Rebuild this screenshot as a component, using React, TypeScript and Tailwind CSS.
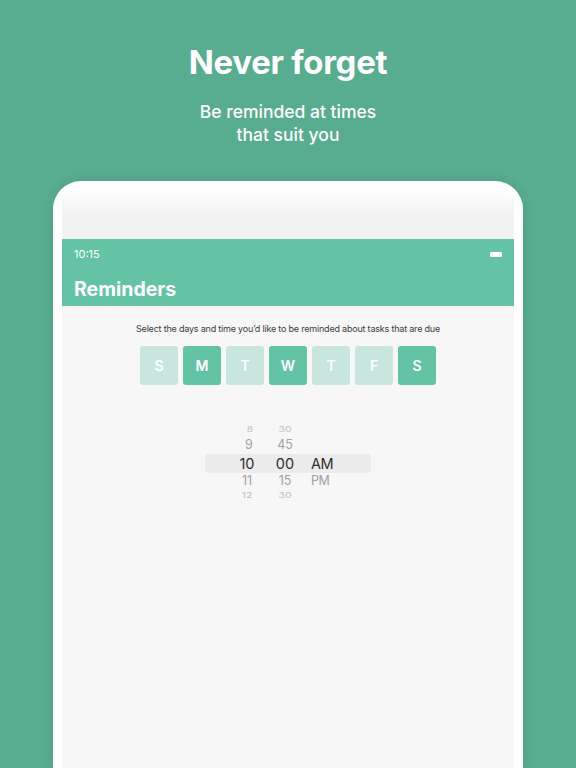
import React from "react";

const days = [
  { l: "S", on: false },
  { l: "M", on: true },
  { l: "T", on: false },
  { l: "W", on: true },
  { l: "T", on: false },
  { l: "F", on: false },
  { l: "S", on: true },
];

export default function App() {
  return (
    <div
      className="w-[576px] h-[768px] overflow-hidden bg-[#58ac8f] flex flex-col items-center"
      style={{ fontFamily: "Inter, 'Open Sans', sans-serif" }}
    >
      <h1 className="pt-[42px] text-[33px] leading-[40px] font-bold text-white tracking-[-0.3px]">
        Never forget
      </h1>
      <p className="mt-[18px] text-[17.5px] leading-[23px] font-medium text-white text-center">
        Be reminded at times
        <br />
        that suit you
      </p>
      <div className="mt-[35px] w-[470px] flex-1 bg-white rounded-t-[28px] px-[9px] pt-[9px] flex flex-col shadow-[0_0_12px_rgba(0,0,0,0.08)]">
        <div className="h-[49px] bg-gradient-to-b from-[#ffffff] via-[#f3f3f3] to-[#f1f1f1]" />
        <div className="h-[67px] bg-[#64c3a5] px-[12px] flex flex-col">
          <div className="h-[30px] flex items-center justify-between">
            <span className="text-[11px] text-white">10:15</span>
            <span className="w-[12px] h-[5px] bg-white rounded-[1.5px]" />
          </div>
          <div className="text-[19.5px] leading-[26px] font-bold text-white mt-[7px]">Reminders</div>
        </div>
        <div className="flex-1 bg-[#f7f7f7] flex flex-col items-center">
          <p className="mt-[16px] text-[9px] leading-[13px] tracking-[-0.2px] text-[#3c3c3c]">
            Select the days and time you’d like to be reminded about tasks that are due
          </p>
          <div className="mt-[11px] flex gap-[4.5px]">
            {days.map((d, i) => (
              <div
                key={i}
                className={
                  "w-[38.5px] h-[39px] rounded-[3px] flex items-center justify-center text-[14px] font-semibold text-white " +
                  (d.on ? "bg-[#64c3a5]" : "bg-[#c8e6dd]")
                }
              >
                {d.l}
              </div>
            ))}
          </div>
          <div className="relative mt-[38px] w-[166px] flex flex-col">
            <div className="absolute left-0 right-0 top-[31px] h-[19px] rounded-[4px] bg-[#ebebeb]" />
            <div className="relative flex h-[13px] items-center text-[10.5px] text-[#c0c0c0]">
              <span className="w-[84px] text-center pl-[6px] scale-y-75">8</span>
              <span className="ml-[-24px] w-[40px] text-center scale-y-75">30</span>
            </div>
            <div className="relative flex h-[18px] items-center text-[12.5px] text-[#a0a0a0]">
              <span className="w-[84px] text-center pl-[4px]">9</span>
              <span className="ml-[-24px] w-[40px] text-center">45</span>
            </div>
            <div className="relative flex h-[19px] items-center text-[14.5px] text-[#2e2e2e]">
              <span className="w-[84px] text-center">10</span>
              <span className="ml-[-24px] w-[40px] text-center">00</span>
              <span className="ml-[6px] tracking-[-0.5px]">AM</span>
            </div>
            <div className="relative flex h-[17px] items-center text-[12.5px] text-[#a0a0a0]">
              <span className="w-[84px] text-center">11</span>
              <span className="ml-[-24px] w-[40px] text-center">15</span>
              <span className="ml-[6px] tracking-[-0.5px]">PM</span>
            </div>
            <div className="relative flex h-[12px] items-center text-[10.5px] text-[#c0c0c0]">
              <span className="w-[84px] text-center scale-y-75">12</span>
              <span className="ml-[-24px] w-[40px] text-center scale-y-75">30</span>
            </div>
          </div>
        </div>
      </div>
    </div>
  );
}
